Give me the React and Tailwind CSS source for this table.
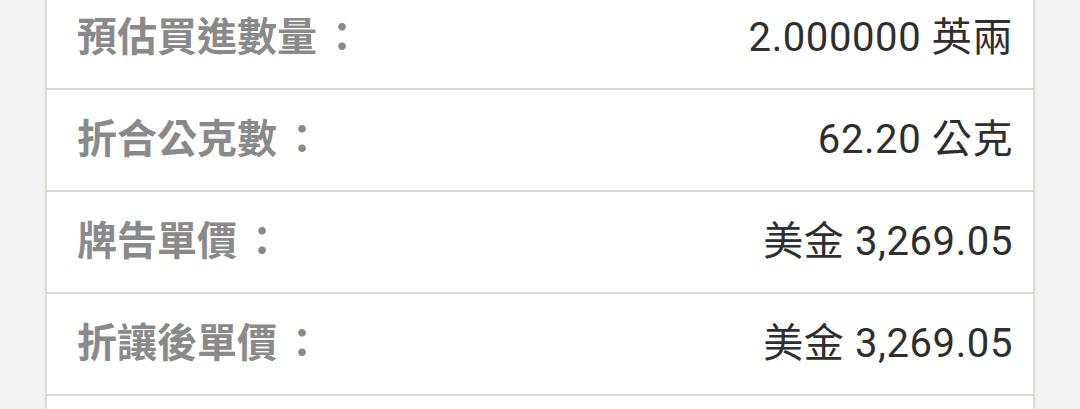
const rows = [
  { label: '預估買進數量', value: '2.000000 英兩' },
  { label: '折合公克數', value: '62.20 公克' },
  { label: '牌告單價', value: '美金 3,269.05' },
  { label: '折讓後單價', value: '美金 3,269.05' },
  { label: '', value: '' },
];

export default function App() {
  return (
    <div
      lang="zh-TW"
      className="h-[409px] w-[1080px] overflow-hidden bg-[#f2f2f2] font-['Roboto','Noto_Sans_CJK_TC',sans-serif]"
    >
      <div className="mx-[45px] -mt-[12px] border-x-2 border-[#dcdcd5] bg-white">
        {rows.map((row, i) => (
          <div
            key={i}
            className="flex h-[102px] items-center justify-between border-b-2 border-[#dcdcd5] pl-[30px] pr-[20px]"
          >
            <span className="text-[40px] font-bold text-[#8a8a8a]">
              {row.label}
              {row.label && <span className="pl-[5px]">：</span>}
            </span>
            <span className="text-[40px] tracking-[0.6px] text-[#2e2e2e]">{row.value}</span>
          </div>
        ))}
      </div>
    </div>
  );
}
